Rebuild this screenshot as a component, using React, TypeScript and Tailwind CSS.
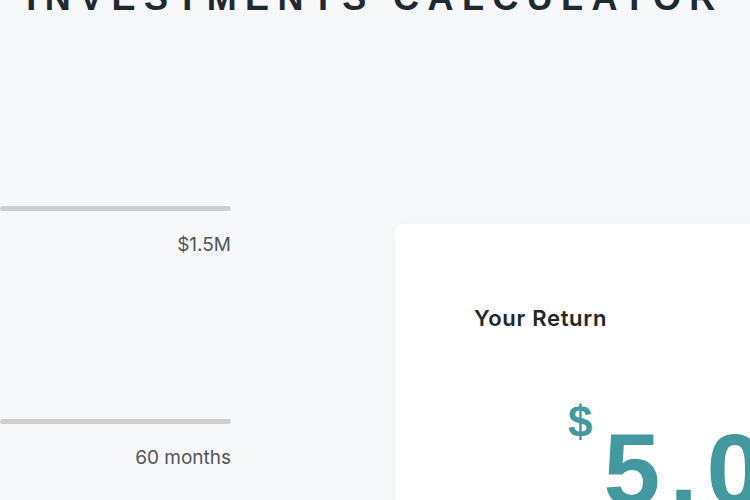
import React from 'react';

const sliders = [
  { label: '$1.5M', gap: 'mt-[190px]' },
  { label: '60 months', gap: 'mt-[165px]' },
];

export default function App() {
  return (
    <div className="relative h-[500px] w-[750px] overflow-hidden bg-[#f7f8fa]">
      <h1 className="mt-[-20px] text-center text-[36px] font-bold leading-none tracking-[8.4px] text-[#1f292f] [font-family:'Liberation_Sans',Arial,sans-serif]">
        INVESTMENTS CALCULATOR
      </h1>

      <div className="flex items-start">
        {/* inputs column (its left part is cut off in the view) */}
        <div className="w-[231px] shrink-0">
          {sliders.map(s => (
            <div key={s.label} className={s.gap}>
              <div className="h-[5px] w-full rounded-full bg-[#cfcfcf]" />
              <p className="mt-[24px] text-right text-[19px] leading-none text-[#4f565c] [font-family:Inter,'Noto_Sans',sans-serif]">
                {s.label}
              </p>
            </div>
          ))}
        </div>

        {/* result card */}
        <div className="ml-[164px] mt-[208px] h-[320px] w-[420px] shrink-0 rounded-lg bg-white pl-[79px] pt-[83px] shadow-[0_1px_6px_rgba(0,0,0,0.04)]">
          <h2 className="text-[22px] font-semibold leading-none tracking-[0.7px] text-[#23272b] [font-family:Inter,sans-serif]">
            Your Return
          </h2>
          <div className="ml-[94px] mt-[71px] flex items-start text-[#44989f] [font-family:'Liberation_Sans',Arial,sans-serif] font-bold">
            <span className="text-[44px] leading-none">$</span>
            <span className="ml-[11px] mt-[19px] text-[102px] leading-none tracking-[9px]">5,000</span>
          </div>
        </div>
      </div>
    </div>
  );
}
